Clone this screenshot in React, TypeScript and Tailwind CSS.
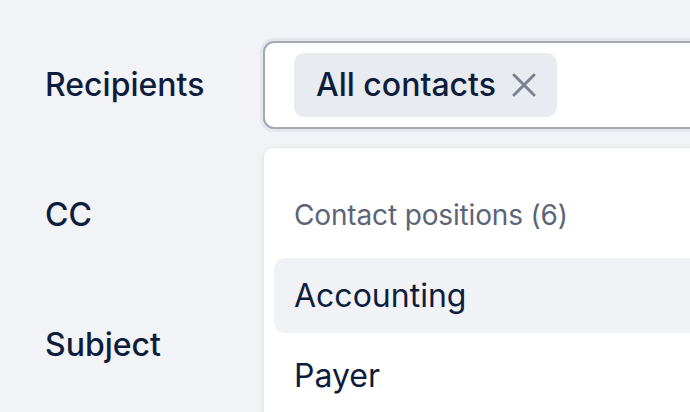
const labelClass =
  "h-[88px] flex items-center text-[32px] font-medium text-[#0f1d3d]";

const CloseIcon = () => (
  <svg width="24" height="24" viewBox="0 0 24 24" fill="none" className="text-[#7c8291]">
    <path d="M2 2L22 22M22 2L2 22" stroke="currentColor" strokeWidth="3" strokeLinecap="round" />
  </svg>
);

const App = () => {
  return (
    <div
      className="w-full h-[412px] overflow-hidden bg-[#f1f3f7] pt-[41px] pl-[45px]"
      style={{ fontFamily: "Inter, 'Noto Sans', sans-serif" }}
    >
      <div className="grid grid-cols-[218px_700px] gap-y-[42px]">
        <div className={labelClass}>Recipients</div>
        <div className="relative z-10">
          <div className="h-[88px] rounded-[11px] border-2 border-[#a3a8b4] bg-white shadow-[0_0_0_3px_#e3e6ec] flex items-center pl-[29px]">
            <div className="h-[64px] flex items-center gap-[16px] rounded-[10px] bg-[#e8ebf0] pl-[22px] pr-[21px]">
              <span className="text-[32px] font-medium text-[#0f1d3d]">All contacts</span>
              <CloseIcon />
            </div>
          </div>

          <div className="absolute left-[0px] top-[106px] w-[700px] h-[400px] rounded-[10px] border border-[#e6e8ed] bg-white shadow-[0_2px_8px_rgba(15,29,61,0.06)] p-[10px]">
            <div className="pt-[37px] pb-[23px] px-[20px] text-[28px] tracking-[-0.15px] leading-[40px] text-[#5b6577]">
              Contact positions (6)
            </div>
            <div className="h-[75px] flex items-center px-[20px] rounded-[10px] bg-[#f0f2f6] text-[32px] text-[#0f1d3d]">
              Accounting
            </div>
            <div className="h-[86px] flex items-center px-[20px] text-[32px] text-[#0f1d3d]">
              Payer
            </div>
          </div>
        </div>

        <div className={labelClass}>CC</div>
        <div className="h-[88px] rounded-[11px] border-2 border-[#dde0e6] bg-white" />

        <div className={labelClass}>Subject</div>
        <div className="h-[88px] rounded-[11px] border-2 border-[#dde0e6] bg-white" />
      </div>
    </div>
  );
};

export default App;
